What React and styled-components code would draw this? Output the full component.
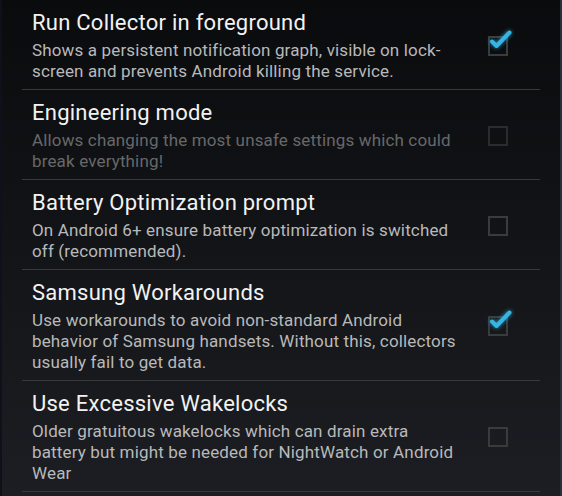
import React from 'react'
import styled, { createGlobalStyle } from 'styled-components'

const GlobalStyle = createGlobalStyle`
  html, body {
    margin: 0;
    padding: 0;
    background: #0b0c0e;
  }
  body {
    font-family: Roboto, "Noto Sans", sans-serif;
  }
`

const Screen = styled.div`
  width: 562px;
  height: 496px;
  box-sizing: border-box;
  overflow: hidden;
  background: linear-gradient(180deg, #0a0b0d 0%, #121316 45%, #1c1e23 100%);
  border-left: 2px solid #0e1119;
  border-right: 2px solid #2a2d3c;
`

const List = styled.div`
  padding: 0 20px 0 20px;
`

const Item = styled.div`
  display: flex;
  align-items: center;
  padding: 9px 0 7px 10px;
  border-bottom: 1px solid #38393c;
`

const Texts = styled.div`
  width: 430px;
`

const Title = styled.div`
  color: #f2f2f2;
  font-size: 22px;
  letter-spacing: 0.25px;
  line-height: 28px;
  margin-bottom: 3px;
  white-space: nowrap;
`

const Summary = styled.div`
  color: ${p => (p.$disabled ? '#67686a' : '#b8b9ba')};
  font-size: 17px;
  letter-spacing: 0.15px;
  line-height: 21px;
`

const Box = styled.div`
  position: relative;
  flex: none;
  width: 16px;
  height: 16px;
  margin-left: 26px;
  border: 2px solid ${p => (p.$disabled ? '#2b2c2e' : '#3a3b3d')};
`

const Tick = styled.svg`
  position: absolute;
  left: 0px;
  top: -10px;
  width: 24px;
  height: 24px;
  overflow: visible;
  filter: drop-shadow(0 0 2px rgba(51, 181, 229, 0.8));
`

function Checkbox({ checked, disabled }) {
  return (
    <Box $disabled={disabled}>
      {checked && (
        <Tick viewBox="0 0 24 24">
          <path d="M2 13.5 L6.5 18 L19.5 4.5" fill="none" stroke="#33b5e5" strokeWidth="4" strokeLinecap="round" strokeLinejoin="round" />
        </Tick>
      )}
    </Box>
  )
}

const prefs = [
  {
    title: 'Run Collector in foreground',
    summary: 'Shows a persistent notification graph, visible on lock-screen and prevents Android killing the service.',
    checked: true
  },
  {
    title: 'Engineering mode',
    summary: 'Allows changing the most unsafe settings which could break everything!',
    checked: false,
    disabled: true
  },
  {
    title: 'Battery Optimization prompt',
    summary: 'On Android 6+ ensure battery optimization is switched off (recommended).',
    checked: false
  },
  {
    title: 'Samsung Workarounds',
    summary: 'Use workarounds to avoid non-standard Android behavior of Samsung handsets. Without this, collectors usually fail to get data.',
    checked: true
  },
  {
    title: 'Use Excessive Wakelocks',
    summary: 'Older gratuitous wakelocks which can drain extra battery but might be needed for NightWatch or Android Wear',
    checked: false
  }
]

export default function App() {
  return (
    <>
      <GlobalStyle />
      <Screen>
        <List>
          {prefs.map(p => (
            <Item key={p.title}>
              <Texts>
                <Title>{p.title}</Title>
                <Summary $disabled={p.disabled}>{p.summary}</Summary>
              </Texts>
              <Checkbox checked={p.checked} disabled={p.disabled} />
            </Item>
          ))}
        </List>
      </Screen>
    </>
  )
}
